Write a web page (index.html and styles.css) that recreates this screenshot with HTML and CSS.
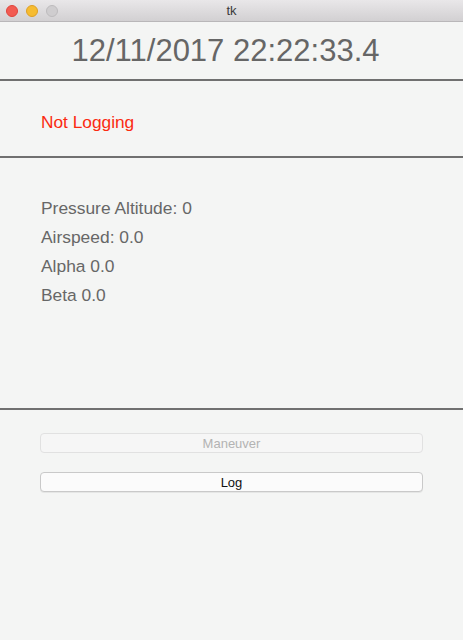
FILE: index.html
```html
<!DOCTYPE html>
<html lang="en">
<head>
    <meta charset="UTF-8">
    <meta name="viewport" content="width=device-width, initial-scale=1.0">
    <title>tk</title>
    <link rel="stylesheet" href="styles.css">
</head>
<body>
    <div class="window">
        <header class="titlebar">
            <div class="lights">
                <span class="light close"></span>
                <span class="light minimize"></span>
                <span class="light zoom"></span>
            </div>
            <span class="title">tk</span>
        </header>

        <section class="clock">
            <p>12/11/2017 22:22:33.4</p>
        </section>

        <section class="status">
            <p>Not Logging</p>
        </section>

        <section class="readings">
            <p>Pressure Altitude: 0</p>
            <p>Airspeed: 0.0</p>
            <p>Alpha 0.0</p>
            <p>Beta 0.0</p>
        </section>

        <section class="controls">
            <button disabled>Maneuver</button>
            <button>Log</button>
        </section>
    </div>
</body>
</html>
```

FILE: styles.css
```css
* {
    margin: 0;
    padding: 0;
    box-sizing: border-box;
}

body {
    font-family: 'Liberation Sans', Arial, sans-serif;
    background-color: #f4f5f4;
    color: #676767;
}

.window {
    width: 463px;
    height: 640px;
    display: flex;
    flex-direction: column;
}

.titlebar {
    height: 22px;
    position: relative;
    display: flex;
    align-items: center;
    justify-content: center;
    background: linear-gradient(#e9e7e9, #d2d0d2);
    border-bottom: 1px solid #b9b7b9;
}

.lights {
    position: absolute;
    left: 6px;
    top: 5px;
    display: flex;
    gap: 8px;
}

.light {
    width: 12px;
    height: 12px;
    border-radius: 50%;
}

.close {
    background-color: #f25b52;
    border: 1px solid #e0443c;
}

.minimize {
    background-color: #f6bc31;
    border: 1px solid #dfa024;
}

.zoom {
    background-color: #cfcdcf;
    border: 1px solid #bdbbbd;
}

.title {
    font-family: 'Liberation Sans', Arial, sans-serif;
    font-size: 13px;
    color: #3a3a3a;
}

.clock {
    height: 59px;
    border-bottom: 2px solid #707070;
    display: flex;
    align-items: center;
    justify-content: center;
    padding: 0 12px 0 0;
}

.clock p {
    font-size: 31px;
    color: #666;
}

.status {
    height: 77px;
    border-bottom: 2px solid #707070;
    padding: 31px 41px 0;
}

.status p {
    font-size: 17.3px;
    color: #fb2a11;
}

.readings {
    height: 252px;
    border-bottom: 2px solid #707070;
    padding: 40px 41px 0;
    display: flex;
    flex-direction: column;
    gap: 9px;
}

.readings p {
    font-size: 17.4px;
    line-height: 20px;
}

.controls {
    padding: 23px 40px 0;
    display: flex;
    flex-direction: column;
    gap: 19px;
}

button {
    width: 100%;
    height: 20px;
    font-family: 'Liberation Sans', Arial, sans-serif;
    font-size: 13px;
    color: #111;
    background-color: #fbfbfb;
    border: 1px solid #c9c9c9;
    border-radius: 4px;
    box-shadow: 0 1px 0 rgba(0, 0, 0, 0.06);
}

button:disabled {
    color: #b3b3b3;
    background-color: #f6f6f6;
    border-color: #e1e1e1;
    box-shadow: none;
}
```
